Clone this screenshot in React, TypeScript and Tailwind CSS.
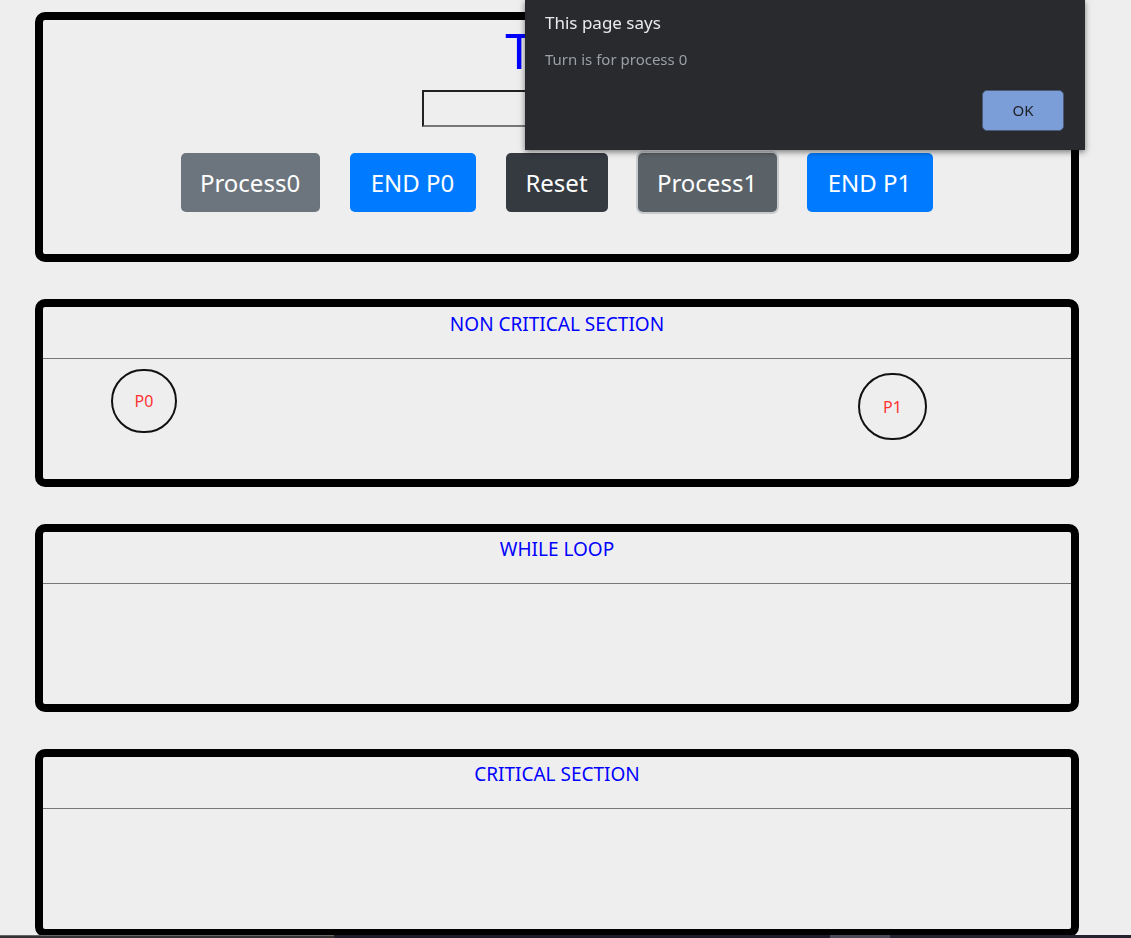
import React from 'react';

const font = { fontFamily: '"Noto Sans", "Open Sans", sans-serif' };

function Section({ title, children }: { title: string; children?: React.ReactNode }) {
  return (
    <div className="h-[188px] rounded-[10px] border-[8px] border-black flex flex-col">
      <div className="h-[52px] shrink-0 border-b border-[#777777] text-center text-[19px] leading-[26px] pt-[4px] text-[#0000ff]">
        {title}
      </div>
      <div className="relative flex-1">{children}</div>
    </div>
  );
}

function Proc({ label, className }: { label: string; className: string }) {
  return (
    <div
      className={`absolute flex items-center justify-center rounded-full border-2 border-[#111111] text-[16px] text-[#ff3333] ${className}`}
    >
      {label}
    </div>
  );
}

export default function App() {
  const btn = 'h-[59px] rounded-[5px] text-white text-[24px] flex items-center justify-center';
  return (
    <div className="min-h-screen bg-[#eeeeee]" style={font}>
      <div className="ml-[35px] w-[1044px] pt-[12px] flex flex-col gap-[37px]">
        {/* Panel de control */}
        <div className="h-[250px] rounded-[10px] border-[8px] border-black flex flex-col items-center">
          <h1 className="text-[50px] leading-[60px] text-[#0000ff] pl-[4px]">Turn</h1>
          <input
            className="mt-[10px] w-[270px] h-[37px] border-2 border-t-[#222222] border-l-[#222222] border-b-[#777777] border-r-[#777777] bg-transparent outline-none"
            readOnly
          />
          <div className="mt-[26px] flex gap-[30px] -ml-[1px]">
            <button className={`${btn} w-[139px] bg-[#6c757d]`}>Process0</button>
            <button className={`${btn} w-[126px] bg-[#007bff]`}>END P0</button>
            <button className={`${btn} w-[102px] bg-[#343a40]`}>Reset</button>
            <button className={`${btn} w-[139px] bg-[#5a6268] shadow-[0_0_0_2px_rgba(130,138,145,0.35)]`}>Process1</button>
            <button className={`${btn} w-[126px] bg-[#007bff]`}>END P1</button>
          </div>
        </div>

        <Section title="NON CRITICAL SECTION">
          <Proc label="P0" className="left-[68px] top-[10px] w-[66px] h-[64px]" />
          <Proc label="P1" className="left-[815px] top-[14px] w-[69px] h-[67px]" />
        </Section>
        <Section title="WHILE LOOP" />
        <Section title="CRITICAL SECTION" />
      </div>

      {/* alerta del navegador */}
      <div className="fixed left-[525px] top-0 w-[560px] h-[150px] bg-[#292a2d] shadow-[0_2px_6px_rgba(0,0,0,0.5)] px-[20px]">
        <div className="pt-[11px] text-[17px] leading-[24px] text-[#e8eaed]">This page says</div>
        <div className="mt-[14px] text-[15px] leading-[21px] text-[#9aa0a6]">Turn is for process 0</div>
        <div className="flex justify-end mt-[20px] pr-[1px]">
          <button className="w-[82px] h-[41px] rounded-[5px] bg-[#7b9ed9] border border-[#4a5a78] text-[15px] text-[#202124]">
            OK
          </button>
        </div>
      </div>

      {/* barra inferior */}
      <div className="fixed left-0 bottom-0 w-full h-[3px] flex">
        <div className="w-[334px] bg-[#333333] border-t border-[#666666]" />
        <div className="w-[496px] bg-[#1c1c2a]" />
        <div className="w-[60px] bg-[#4a4a5a]" />
        <div className="flex-1 bg-[#23232f]" />
      </div>
    </div>
  );
}
